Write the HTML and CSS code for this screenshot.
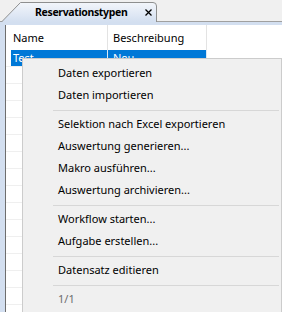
FILE: index.html
```html
<!DOCTYPE html>
<html lang="de">
<head>
    <meta charset="UTF-8">
    <meta name="viewport" content="width=device-width, initial-scale=1.0">
    <title>Reservationstypen</title>
    <link rel="stylesheet" href="styles.css">
</head>
<body>
    <div class="window">
        <div class="tabstrip">
            <div class="tab">
                <svg class="tab-shape" width="157" height="22" viewBox="0 0 157 22">
                    <defs>
                        <linearGradient id="tabFill" x1="0" y1="0" x2="0" y2="1">
                            <stop offset="0" stop-color="#f3f6fb"/>
                            <stop offset="1" stop-color="#d3dff0"/>
                        </linearGradient>
                    </defs>
                    <path d="M0.5 22 L19.5 2.5 H152 Q155.5 2.5 155.5 6 V22" fill="url(#tabFill)" stroke="#8e8f8f"/>
                </svg>
                <span class="tab-title">Reservationstypen</span>
                <svg class="tab-close" width="7" height="7" viewBox="0 0 7 7">
                    <path d="M0.5 0.5 L6.5 6.5 M6.5 0.5 L0.5 6.5" stroke="#000" stroke-width="1.3"/>
                </svg>
            </div>
        </div>
        <div class="frame">
            <div class="grid">
                <div class="grid-head">
                    <div class="cell lead"></div>
                    <div class="cell col-name">Name</div>
                    <div class="cell col-desc">Beschreibung</div>
                    <div class="cell col-rest"></div>
                </div>
                <div class="row selected">
                    <div class="cell lead"></div>
                    <div class="cell col-name">Test</div>
                    <div class="cell col-desc">Neu</div>
                    <div class="cell col-rest"></div>
                </div>
                <div class="row"></div>
                <div class="row"></div>
                <div class="row"></div>
                <div class="row"></div>
                <div class="row"></div>
                <div class="row"></div>
                <div class="row"></div>
                <div class="row"></div>
                <div class="row"></div>
                <div class="row"></div>
                <div class="row"></div>
                <div class="row"></div>
                <div class="row"></div>
                <div class="row"></div>
            </div>
        </div>

        <ul class="context-menu">
            <li class="item">Daten exportieren</li>
            <li class="item">Daten importieren</li>
            <li class="sep"></li>
            <li class="item">Selektion nach Excel exportieren</li>
            <li class="item">Auswertung generieren...</li>
            <li class="item">Makro ausführen...</li>
            <li class="item">Auswertung archivieren...</li>
            <li class="sep"></li>
            <li class="item">Workflow starten...</li>
            <li class="item">Aufgabe erstellen...</li>
            <li class="sep"></li>
            <li class="item">Datensatz editieren</li>
            <li class="sep"></li>
            <li class="item disabled">1/1</li>
        </ul>
    </div>
</body>
</html>
```

FILE: styles.css
```css
body {
    margin: 0;
    padding: 0;
    font-family: "Noto Sans", Arial, sans-serif;
    font-size: 11px;
    color: #000;
    overflow: hidden;
}
.window {
    position: relative;
    width: 282px;
    height: 312px;
    display: flex;
    flex-direction: column;
    background-color: #f0f0f0;
    overflow: hidden;
}
.tabstrip {
    display: flex;
    height: 21px;
    border-bottom: 1px solid #a0a0a0;
    background-color: #f0f0f0;
}
.tab {
    position: relative;
    display: flex;
    align-items: center;
    width: 157px;
    height: 22px;
    margin-left: 1px;
}
.tab-shape {
    position: absolute;
    left: 0;
    top: 0;
}
.tab-title {
    position: relative;
    margin-left: 34px;
    margin-top: 1px;
    font-size: 10.5px;
    font-weight: bold;
    letter-spacing: -0.35px;
}
.tab-close {
    position: relative;
    margin-left: auto;
    margin-right: 6px;
    margin-top: 2px;
}
.frame {
    flex: 1;
    display: flex;
    padding: 3px 0 0 5px;
    background-color: #d3dff0;
}
.grid {
    flex: 1;
    background-color: #fff;
    border-left: 1px solid #6e6e6e;
}
.grid-head {
    display: flex;
    height: 25px;
}
.grid-head .cell {
    display: flex;
    align-items: center;
    padding-top: 1px;
}
.row {
    display: flex;
    height: 16px;
    border-bottom: 1px solid #efefef;
}
.cell {
    box-sizing: border-box;
    padding-left: 2px;
    line-height: 16px;
    white-space: nowrap;
    overflow: hidden;
}
.cell.lead {
    width: 5px;
    padding: 0;
    background-color: #fff;
}
.col-name {
    width: 97px;
    border-right: 1px solid #e3e3e3;
}
.col-desc {
    width: 99px;
    padding-left: 5px;
    border-right: 1px solid #e3e3e3;
}
.col-rest {
    flex: 1;
}
.row.selected .col-name,
.row.selected .col-desc {
    background-color: #0078d7;
    color: #fff;
    border-right-color: #d9e8f6;
}
.context-menu {
    position: absolute;
    left: 22px;
    top: 58px;
    width: 260px;
    box-sizing: border-box;
    margin: 0;
    padding: 3px 2px 4px 0;
    list-style: none;
    background-color: #f0f0f0;
    border: 1px solid #cccccc;
}
.context-menu .item {
    height: 22px;
    line-height: 22px;
    padding-left: 35px;
    white-space: nowrap;
}
.context-menu .item.disabled {
    color: #6d6d6d;
}
.context-menu .sep {
    height: 1px;
    margin: 4px 0 2px 30px;
    background-color: #d7d7d7;
}
```
